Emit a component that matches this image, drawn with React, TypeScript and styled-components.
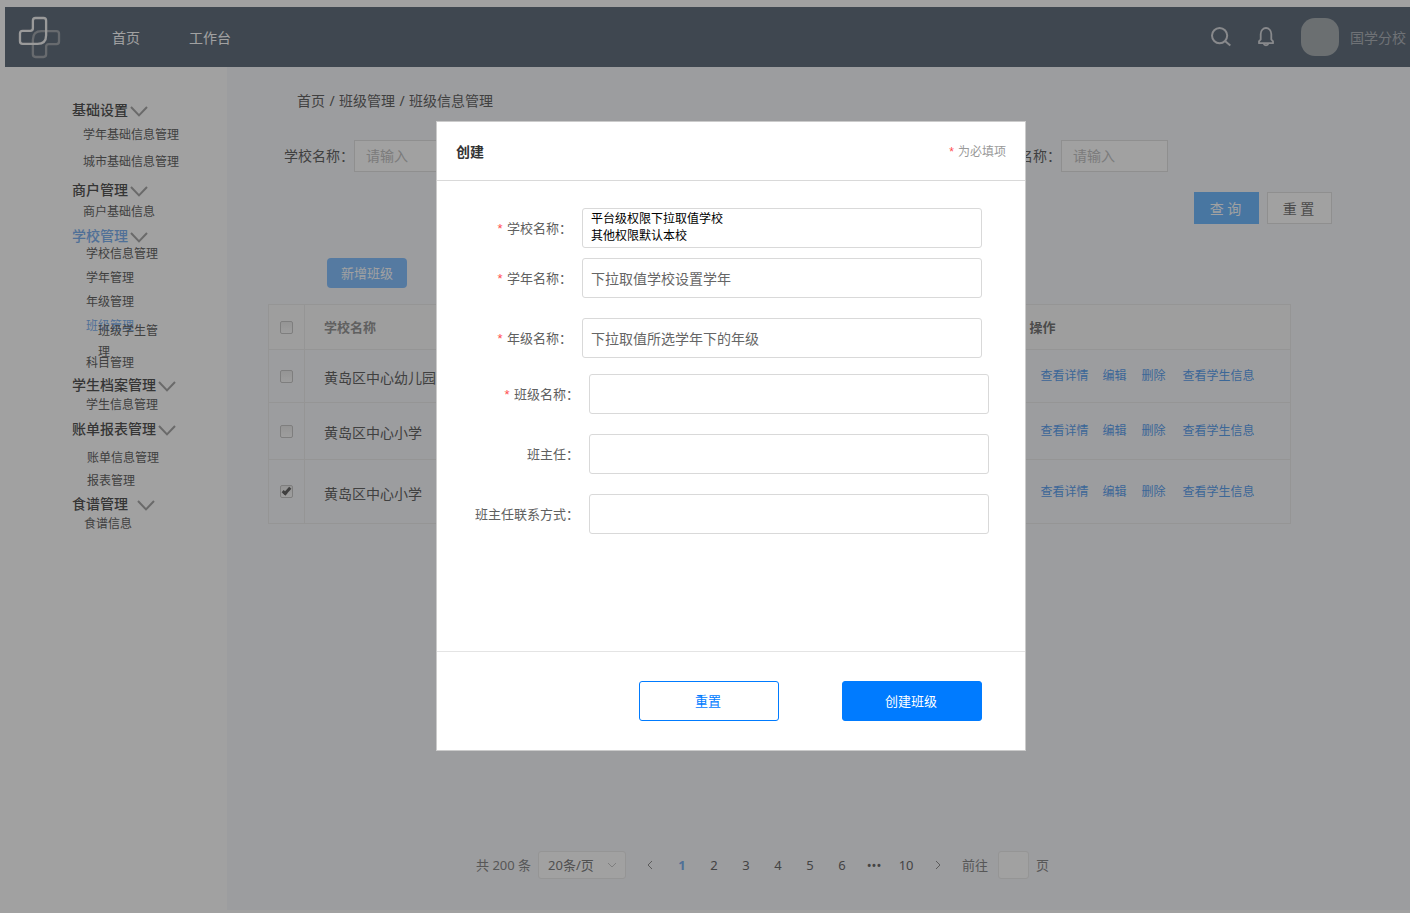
import React from "react";
import styled, { createGlobalStyle } from "styled-components";

const GlobalStyle = createGlobalStyle`
  *, *::before, *::after { box-sizing: border-box; }
  body {
    margin: 0;
    background: #fff;
    color: #666;
    font-family: "Noto Sans", "Noto Sans CJK SC", sans-serif;
    font-size: 14px;
  }
  button, input, select, textarea { font: inherit; color: inherit; margin: 0; }
  ul { list-style: none; margin: 0; padding: 0; }
  a { text-decoration: none; color: inherit; }
`;

const Page = styled.div`
  min-height: 100vh;
  display: flex;
  flex-direction: column;
  padding: 7px 0 3px;
`;

const TopBar = styled.header`
  height: 60px;
  margin-left: 5px;
  padding: 0 4px 0 13px;
  display: flex;
  align-items: center;
  background: #64717f;
  color: #fff;
`;

const TopNav = styled.nav`
  display: flex;
  gap: 49px;
  margin-left: 51px;
  padding-top: 2px;
  flex: 1;
  line-height: 20px;
`;

const TopTools = styled.div`
  display: flex;
  align-items: center;
  color: #d8dade;
`;

const IconButton = styled.button`
  display: flex;
  padding: 0;
  border: 0;
  background: none;
  margin-right: 27px;
`;

const Avatar = styled.span`
  width: 38px;
  height: 38px;
  margin-right: 11px;
  border-radius: 14px;
  background: #aab0b4;
`;

const UserName = styled.span`
  padding-top: 2px;
  color: #b0b5bb;
  line-height: 20px;
`;

const Body = styled.div`
  flex: 1;
  display: flex;
`;

const Sidebar = styled.nav`
  width: 227px;
  flex: none;
  padding: 34px 0 0 72px;
`;

const Group = styled.section<{ $top: number }>`
  margin-top: ${(p) => p.$top}px;
`;

const GroupTitle = styled.h2<{ $active?: boolean; $gap?: number }>`
  margin: 0;
  display: flex;
  align-items: center;
  gap: ${(p) => p.$gap ?? 2}px;
  font-size: 14px;
  line-height: 18px;
  font-weight: 500;
  color: ${(p) => (p.$active ? "#7fb2f0" : "#555")};
  svg { color: #a8a8a8; margin-top: 2px; }
`;

const Items = styled.ul<{ $top: number; $gap: number; $indent: number }>`
  padding: ${(p) => p.$top}px 0 0 ${(p) => p.$indent}px;
  display: flex;
  flex-direction: column;
  gap: ${(p) => p.$gap}px;
  font-size: 12px;
  line-height: 16px;
`;

const Item = styled.li<{ $active?: boolean; $nested?: boolean }>`
  position: relative;
  min-height: ${(p) => (p.$nested ? 29 : 16)}px;
  > a { color: ${(p) => (p.$active ? "#7fb2f0" : "#666")}; }
`;

const SubItems = styled.ul`
  position: absolute;
  top: 2px;
  left: 12px;
  width: 66px;
  line-height: 21px;
`;

const Main = styled.main`
  flex: 1;
  min-width: 0;
  background: #f8f9fc;
  padding: 24px 0 31px 41px;
  display: flex;
  flex-direction: column;
`;

const Breadcrumb = styled.nav`
  display: flex;
  margin-left: 29px;
  line-height: 20px;
`;

const Slash = styled.span`
  width: 14px;
  text-align: center;
`;

const Filters = styled.form`
  padding: 29px 78px 0 16px;
`;

const FilterRow = styled.div`
  display: flex;
  justify-content: space-between;
  padding-right: 164px;
`;

const FilterField = styled.label`
  display: flex;
  align-items: center;
  line-height: 20px;
`;

const FilterInput = styled.input`
  width: 107px;
  height: 32px;
  padding: 0 11px 2px;
  border: 1px solid #e2e2e2;
  background: #fff;
  &::placeholder { color: #c4c4c4; opacity: 1; }
`;

const FilterActions = styled.div`
  display: flex;
  justify-content: flex-end;
  gap: 8px;
  margin-top: 20px;
`;

const FilterButton = styled.button<{ $primary?: boolean }>`
  width: 65px;
  height: 32px;
  padding: 0 2px 1px 0;
  border: 1px solid ${(p) => (p.$primary ? "#72bbff" : "#e2e2e2")};
  background: ${(p) => (p.$primary ? "#72bbff" : "#fff")};
  color: ${(p) => (p.$primary ? "#fff" : "#777")};
`;

const AddButton = styled.button`
  width: 80px;
  height: 30px;
  margin: 34px 0 16px 59px;
  padding: 0 0 1px;
  border: 0;
  border-radius: 4px;
  background: #87c2ff;
  color: #fff;
  font-size: 13px;
`;

const TableWrap = styled.div`
  padding-right: 119px;
`;

const Table = styled.table`
  width: 100%;
  table-layout: fixed;
  border-collapse: collapse;
  text-align: left;
  border: 1px solid #ececec;
  line-height: 20px;
`;

const Row = styled.tr<{ $height: number }>`
  height: ${(p) => p.$height}px;
  border-bottom: 1px solid #ececec;
`;

const HeadCell = styled.th<{ $strong?: boolean }>`
  padding: 0 0 0 ${(p) => (p.$strong ? 0 : 19)}px;
  background: #fbfbfb;
  font-size: 13px;
  font-weight: 700;
  color: ${(p) => (p.$strong ? "#777" : "#999")};
`;

const Cell = styled.td`
  padding: 4px 0 0 19px;
`;

const CheckHead = styled.th`
  width: 36px;
  padding: 0;
  background: #fbfbfb;
  border-right: 1px solid #ececec;
`;

const CheckCell = styled.td`
  width: 36px;
  padding: 0;
  border-right: 1px solid #ececec;
`;

const Check = styled.input`
  appearance: none;
  display: grid;
  place-items: center;
  width: 13px;
  height: 13px;
  margin: 0 auto;
  border: 1px solid #c8c8c8;
  border-radius: 2px;
  background: linear-gradient(#ececec, #fafafa);
  &:checked::before {
    content: "";
    width: 9px;
    height: 5px;
    margin-top: -3px;
    border: solid #666;
    border-width: 0 0 3px 3px;
    transform: rotate(-48deg);
  }
`;

const OpHead = styled(HeadCell)`
  width: 261px;
`;

const OpCell = styled.td`
  padding: 0 0 0 11px;
`;

const Ops = styled.div`
  display: flex;
  font-size: 12px;
  line-height: 16px;
  color: #5ea3f0;
  a { margin-right: 14px; }
  a:nth-child(2) { margin-right: 15px; }
  a:nth-child(3) { margin-right: 17px; }
`;

const Pagination = styled.nav`
  margin: auto 0 0 208px;
  display: flex;
  align-items: center;
  line-height: 20px;
`;

const Muted = styled.span`
  font-size: 13px;
  color: #8a8a8a;
`;

const SizeBox = styled.span`
  display: flex;
  align-items: center;
  width: 88px;
  height: 28px;
  margin: 0 8px 0 7px;
  padding-right: 8px;
  border: 1px solid #ececec;
  border-radius: 3px;
  background: #fff;
  color: #c9c9c9;
`;

const SizeSelect = styled.select`
  appearance: none;
  flex: 1;
  min-width: 0;
  padding: 0 0 0 9px;
  border: 0;
  background: none;
  font-size: 13px;
  color: #808080;
`;

const PageButton = styled.button<{ $current?: boolean }>`
  display: flex;
  justify-content: center;
  align-items: center;
  width: 32px;
  height: 28px;
  padding: 0;
  border: 0;
  background: none;
  font-size: 13px;
  font-weight: ${(p) => (p.$current ? 700 : 400)};
  color: ${(p) => (p.$current ? "#7fb2f0" : "#6c6c6c")};
  svg { color: #909090; }
`;

const JumpLabel = styled.label`
  display: flex;
  align-items: center;
  gap: 10px;
  margin: 0 7px 0 8px;
  font-size: 13px;
  color: #8a8a8a;
`;

const JumpInput = styled.input`
  width: 31px;
  height: 28px;
  padding: 0 4px;
  border: 1px solid #ececec;
  border-radius: 3px;
  background: #fff;
`;

const Overlay = styled.div`
  position: fixed;
  inset: 0;
  display: flex;
  justify-content: center;
  align-items: flex-start;
  padding: 121px 0 0 52px;
  background: rgba(0, 0, 0, 0.37);
  overflow: auto;
`;

const Dialog = styled.section`
  width: 590px;
  border: 1px solid #cbcbcb;
  background: #fff;
  color: #606060;
`;

const DialogHead = styled.header`
  display: flex;
  justify-content: space-between;
  align-items: center;
  height: 59px;
  padding: 2px 19px 0;
  border-bottom: 1px solid #d9d9d9;
`;

const DialogTitle = styled.h1`
  margin: 0;
  font-size: 14px;
  line-height: 20px;
  font-weight: 700;
  color: #333;
`;

const Hint = styled.span`
  font-size: 12px;
  line-height: 18px;
  color: #999;
`;

const Star = styled.span`
  font-family: "Liberation Sans", sans-serif;
  color: #ff4d4f;
  margin-right: 1px;
`;

const Fields = styled.div<{ $shift?: boolean }>`
  display: flex;
  flex-direction: column;
  padding-left: ${(p) => (p.$shift ? 7 : 0)}px;
  padding-top: ${(p) => (p.$shift ? 16 : 0)}px;
`;

const FormBody = styled.form`
  padding: 27px 0 117px;
  border-bottom: 1px solid #e4e4e4;
`;

const Field = styled.label<{ $top?: number }>`
  display: grid;
  grid-template-columns: 135px 400px;
  column-gap: 10px;
  align-items: center;
  margin-top: ${(p) => p.$top ?? 0}px;
  font-size: 13px;
  line-height: 20px;
  > span { text-align: right; }
`;

const TextBox = styled.input`
  width: 100%;
  height: 40px;
  padding: 0 8px;
  border: 1px solid #d9d9d9;
  border-radius: 3px;
  background: #fff;
  font-size: 14px;
  color: #666;
`;

const TextArea = styled.textarea`
  display: block;
  width: 100%;
  height: 40px;
  padding: 1px 8px;
  border: 1px solid #d9d9d9;
  border-radius: 3px;
  resize: none;
  overflow: hidden;
  background: #fff;
  font-size: 12px;
  line-height: 17px;
  color: #000;
`;

const DialogFoot = styled.footer`
  display: flex;
  justify-content: flex-end;
  gap: 63px;
  padding: 29px 43px;
`;

const DialogButton = styled.button<{ $primary?: boolean }>`
  width: 140px;
  height: 40px;
  padding: 0 2px 2px 0;
  border: 1px solid #007bff;
  border-radius: 3px;
  background: ${(p) => (p.$primary ? "#007bff" : "#fff")};
  color: ${(p) => (p.$primary ? "#fff" : "#007bff")};
  font-size: 13px;
`;

const logoHalf =
  "M105 52H129Q137 52 137 60V104Q137 130 111 130H66Q58 130 58 122V99Q58 91 66 91H89Q97 91 97 83V60Q97 52 105 52Z";

const Logo = () => (
  <svg width="43" height="43" viewBox="52 46 130 130" fill="none" strokeWidth="7" aria-hidden="true">
    <path d={logoHalf} stroke="#a4a9ae" transform="rotate(180 117 111)" />
    <path d={logoHalf} stroke="#f4f4f4" />
  </svg>
);

const SearchIcon = () => (
  <svg width="20" height="20" viewBox="0 0 20 20" fill="none" stroke="currentColor" strokeWidth="2">
    <circle cx="8.6" cy="8.6" r="7.6" />
    <path d="M14 14L19.3 18.6" />
  </svg>
);

const BellIcon = () => (
  <svg width="16" height="20" viewBox="0 0 16 20" fill="none" stroke="currentColor" strokeWidth="1.8">
    <path d="M1 16.2V14.4L2.7 12.4V7A5.3 6 0 0 1 13.3 7V12.4L15 14.4V16.2Z" strokeLinejoin="round" />
    <path d="M5.6 16.6A2.5 2.5 0 0 0 10.4 16.6" />
  </svg>
);

const Chevron = () => (
  <svg width="18" height="11" viewBox="0 0 18 11" fill="none" stroke="currentColor" strokeWidth="2" aria-hidden="true">
    <path d="M1 1L9 9.4L17 1" />
  </svg>
);

const SmallChevron = ({ d, w, h }: { d: string; w: number; h: number }) => (
  <svg width={w} height={h} viewBox={`0 0 ${w} ${h}`} fill="none" stroke="currentColor" aria-hidden="true">
    <path d={d} />
  </svg>
);

type MenuItem = { label: string; active?: boolean; sub?: string };
type MenuGroup = {
  title: string;
  active?: boolean;
  titleGap?: number;
  top: number;
  listTop: number;
  gap: number;
  indent: number;
  items: MenuItem[];
};

const menu: MenuGroup[] = [
  { title: "基础设置", top: 0, listTop: 8, gap: 11, indent: 11, items: [{ label: "学年基础信息管理" }, { label: "城市基础信息管理" }] },
  { title: "商户管理", top: 11, listTop: 5, gap: 8, indent: 11, items: [{ label: "商户基础信息" }] },
  {
    title: "学校管理", active: true, top: 7, listTop: 1, gap: 8, indent: 14,
    items: [
      { label: "学校信息管理" },
      { label: "学年管理" },
      { label: "年级管理" },
      { label: "班级管理", active: true, sub: "班级学生管理" },
      { label: "科目管理" },
    ],
  },
  { title: "学生档案管理", top: 5, listTop: 3, gap: 8, indent: 14, items: [{ label: "学生信息管理" }] },
  { title: "账单报表管理", top: 7, listTop: 12, gap: 7, indent: 15, items: [{ label: "账单信息管理" }, { label: "报表管理" }] },
  { title: "食谱管理", titleGap: 9, top: 6, listTop: 3, gap: 8, indent: 12, items: [{ label: "食谱信息" }] },
];

const schools = [
  { name: "黄岛区中心幼儿园", height: 53, checked: false },
  { name: "黄岛区中心小学", height: 57, checked: false },
  { name: "黄岛区中心小学", height: 64, checked: true },
];

export default function App() {
  return (
    <>
      <GlobalStyle />
      <Page>
        <TopBar>
          <Logo />
          <TopNav>
            <a href="#home">首页</a>
            <a href="#work">工作台</a>
          </TopNav>
          <TopTools>
            <IconButton aria-label="搜索"><SearchIcon /></IconButton>
            <IconButton aria-label="通知"><BellIcon /></IconButton>
            <Avatar />
            <UserName>国学分校</UserName>
          </TopTools>
        </TopBar>
        <Body>
          <Sidebar>
            {menu.map((g) => (
              <Group key={g.title} $top={g.top}>
                <GroupTitle $active={g.active} $gap={g.titleGap}>
                  {g.title}
                  <Chevron />
                </GroupTitle>
                <Items $top={g.listTop} $gap={g.gap} $indent={g.indent}>
                  {g.items.map((i) => (
                    <Item key={i.label} $active={i.active} $nested={!!i.sub}>
                      <a href="#menu">{i.label}</a>
                      {i.sub && (
                        <SubItems>
                          <li><a href="#menu">{i.sub}</a></li>
                        </SubItems>
                      )}
                    </Item>
                  ))}
                </Items>
              </Group>
            ))}
          </Sidebar>
          <Main>
            <Breadcrumb>
              <a href="#home">首页</a>
              <Slash>/</Slash>
              <a href="#class">班级管理</a>
              <Slash>/</Slash>
              <span>班级信息管理</span>
            </Breadcrumb>
            <Filters>
              <FilterRow>
                <FilterField>学校名称：<FilterInput placeholder="请输入" /></FilterField>
                <FilterField>班级名称：<FilterInput placeholder="请输入" /></FilterField>
              </FilterRow>
              <FilterActions>
                <FilterButton type="button" $primary>查 询</FilterButton>
                <FilterButton type="reset">重 置</FilterButton>
              </FilterActions>
            </Filters>
            <div>
              <AddButton>新增班级</AddButton>
            </div>
            <TableWrap>
              <Table>
                <thead>
                  <Row $height={45}>
                    <CheckHead><Check type="checkbox" aria-label="全选" /></CheckHead>
                    <HeadCell>学校名称</HeadCell>
                    <OpHead $strong>操作</OpHead>
                  </Row>
                </thead>
                <tbody>
                  {schools.map((s, i) => (
                    <Row key={i} $height={s.height}>
                      <CheckCell><Check type="checkbox" aria-label={s.name} defaultChecked={s.checked} /></CheckCell>
                      <Cell>{s.name}</Cell>
                      <OpCell>
                        <Ops>
                          <a href="#detail">查看详情</a>
                          <a href="#edit">编辑</a>
                          <a href="#delete">删除</a>
                          <a href="#students">查看学生信息</a>
                        </Ops>
                      </OpCell>
                    </Row>
                  ))}
                </tbody>
              </Table>
            </TableWrap>
            <Pagination>
              <Muted>共 200 条</Muted>
              <SizeBox>
                <SizeSelect aria-label="每页条数"><option>20条/页</option></SizeSelect>
                <SmallChevron w={10} h={6} d="M1 1L5 5L9 1" />
              </SizeBox>
              <PageButton aria-label="上一页"><SmallChevron w={6} h={10} d="M5 1L1 5L5 9" /></PageButton>
              {["1", "2", "3", "4", "5", "6", "•••", "10"].map((n) => (
                <PageButton key={n} $current={n === "1"}>{n}</PageButton>
              ))}
              <PageButton aria-label="下一页"><SmallChevron w={6} h={10} d="M1 1L5 5L1 9" /></PageButton>
              <JumpLabel>前往<JumpInput /></JumpLabel>
              <Muted>页</Muted>
            </Pagination>
          </Main>
        </Body>
      </Page>
      <Overlay>
        <Dialog role="dialog" aria-modal="true" aria-labelledby="dialog-title">
          <DialogHead>
            <DialogTitle id="dialog-title">创建</DialogTitle>
            <Hint><Star>*</Star> 为必填项</Hint>
          </DialogHead>
          <FormBody id="class-form">
            <Fields>
              <Field>
                <span><Star>*</Star> 学校名称：</span>
                <TextArea defaultValue={"平台级权限下拉取值学校\n其他权限默认本校"} />
              </Field>
              <Field $top={10}>
                <span><Star>*</Star> 学年名称：</span>
                <TextBox defaultValue="下拉取值学校设置学年" />
              </Field>
              <Field $top={20}>
                <span><Star>*</Star> 年级名称：</span>
                <TextBox defaultValue="下拉取值所选学年下的年级" />
              </Field>
            </Fields>
            <Fields $shift>
              <Field>
                <span><Star>*</Star> 班级名称：</span>
                <TextBox />
              </Field>
              <Field $top={20}>
                <span>班主任：</span>
                <TextBox />
              </Field>
              <Field $top={20}>
                <span>班主任联系方式：</span>
                <TextBox />
              </Field>
            </Fields>
          </FormBody>
          <DialogFoot>
            <DialogButton type="reset" form="class-form">重置</DialogButton>
            <DialogButton type="submit" form="class-form" $primary>创建班级</DialogButton>
          </DialogFoot>
        </Dialog>
      </Overlay>
    </>
  );
}
